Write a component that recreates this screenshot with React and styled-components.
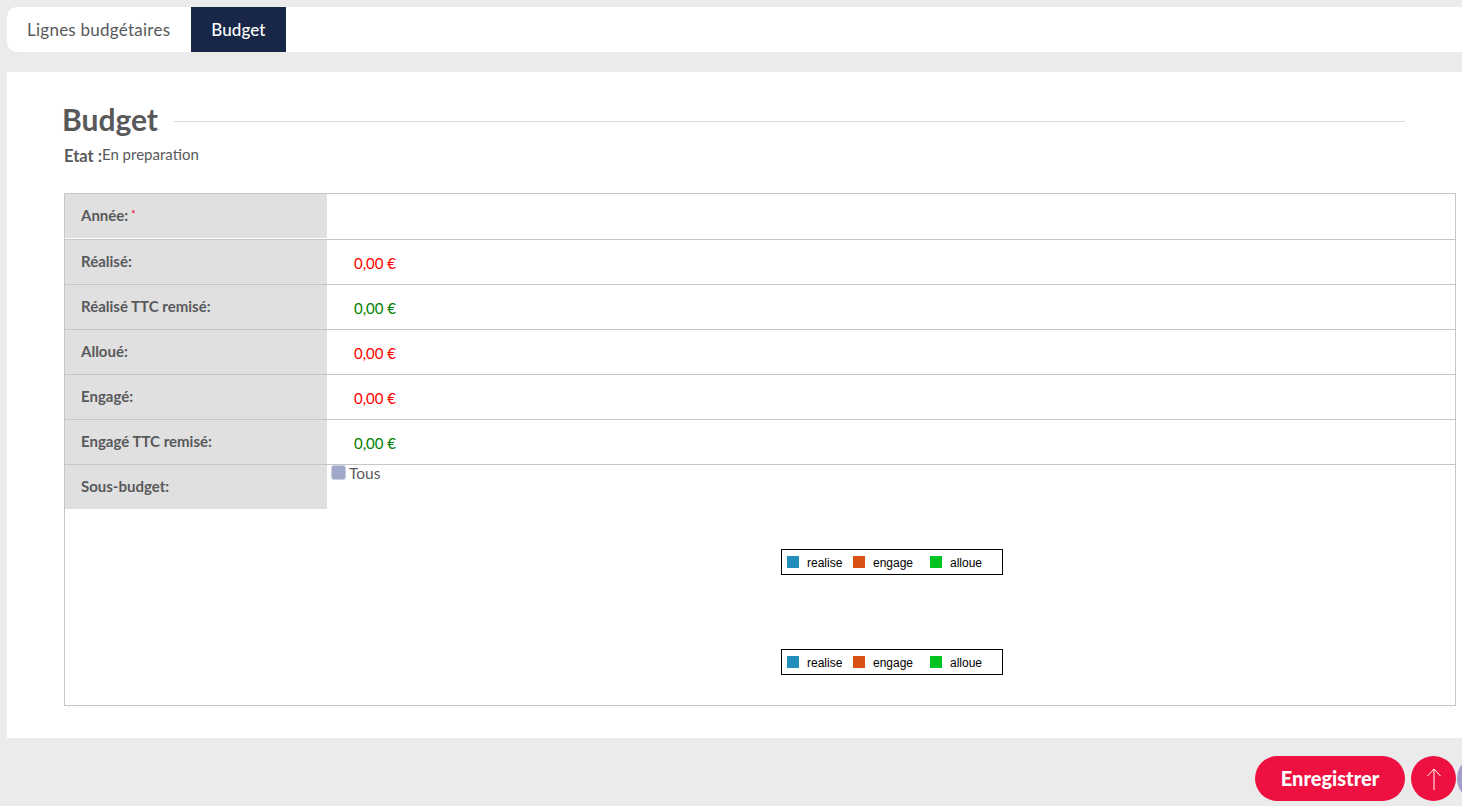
import styled, { createGlobalStyle } from "styled-components";

const GlobalStyle = createGlobalStyle`
  html, body {
    margin: 0;
    padding: 0;
    background: #ebebeb;
    overflow: hidden;
  }
  * { box-sizing: border-box; }
`;

const Page = styled.div`
  width: 1462px;
  height: 806px;
  overflow: hidden;
  padding: 7px 0 0 7px;
  font-family: "Lato", "Open Sans", sans-serif;
  color: #58595b;
`;

const TabBar = styled.div`
  display: flex;
  height: 45px;
  background: #fff;
  border-radius: 10px 0 0 10px;
`;

const Tab = styled.div`
  display: flex;
  align-items: center;
  padding: 0 ${(p) => (p.$active ? 20 : 21)}px 0 20px;
  font-size: 17px;
  letter-spacing: ${(p) => (p.$active ? 0.1 : 0.25)}px;
  background: ${(p) => (p.$active ? "#182747" : "transparent")};
  color: ${(p) => (p.$active ? "#fff" : "#58595b")};
  font-weight: ${(p) => (p.$active ? 500 : 400)};
`;

const Card = styled.div`
  margin-top: 20px;
  height: 666px;
  background: #fff;
  padding: 32px 6px 0 55px;
`;

const TitleRow = styled.div`
  display: flex;
  align-items: center;
  gap: 16px;
  height: 32px;
  padding-right: 51px;
`;

const Title = styled.h1`
  margin: 0 0 2px;
  font-size: 30px;
  font-weight: 700;
  line-height: 32px;
  color: #58595b;
`;

const TitleRule = styled.div`
  flex: 1;
  height: 1px;
  margin-top: 2px;
  background: #d9d9d9;
`;

const State = styled.div`
  display: flex;
  align-items: baseline;
  height: 24px;
  margin-top: 8px;
  margin-left: 2px;
  line-height: 24px;
`;

const StateLabel = styled.span`
  font-size: 16.5px;
  font-weight: 700;
`;

const StateValue = styled.span`
  font-size: 15px;
  position: relative;
  top: -2px;
`;

const Table = styled.div`
  margin-top: 25px;
  margin-left: 2px;
  height: 513px;
  border: 1px solid #c6c6c6;
`;

const Row = styled.div`
  display: flex;
  height: ${(p) => p.$height || 45}px;
  border-bottom: ${(p) => (p.$last ? "none" : "1px solid #c6c6c6")};
`;

const Label = styled.div`
  width: 262px;
  height: 44px;
  display: flex;
  align-items: center;
  padding: 0 0 2px 16px;
  background: #e0e0e0;
  font-size: 15px;
  font-weight: 700;
  color: #58595b;
`;

const Required = styled.sup`
  color: #ed1040;
  font-size: 10px;
  margin-left: 3px;
  line-height: 1;
  position: relative;
  top: -2px;
`;

const Value = styled.div`
  display: flex;
  align-items: center;
  padding: 2px 0 0 27px;
  font-size: 15px;
  color: ${(p) => p.$color};
`;

const CheckRow = styled.label`
  display: flex;
  align-items: flex-start;
  gap: 3px;
  padding: 0 0 0 4px;
  font-size: 15.5px;
  line-height: 16px;
`;

const CheckBox = styled.span`
  width: 15px;
  height: 15px;
  background: #a0aac8;
  border: 1px solid #c9cfdf;
  border-radius: 3px;
`;

const Charts = styled.div`
  height: 196px;
  padding: 40px 0 0 716px;
  display: flex;
  flex-direction: column;
  gap: 74px;
`;

const Legend = styled.div`
  display: flex;
  align-items: center;
  width: 222px;
  height: 26px;
  padding-left: 5px;
  border: 1px solid #000;
  background: #fff;
  font-family: "Liberation Sans", Arial, sans-serif;
  font-size: 12px;
  color: #000;
`;

const LegendItem = styled.div`
  display: flex;
  align-items: center;
  width: ${(p) => p.$width}px;
`;

const LegendText = styled.span`
  padding-top: 2px;
`;

const Swatch = styled.span`
  width: 12px;
  height: 12px;
  margin-right: 8px;
  background: ${(p) => p.$color};
`;

const Actions = styled.div`
  display: flex;
  align-items: center;
  margin-top: 18px;
  padding-left: 1248px;
  width: 1500px;
`;

const SaveButton = styled.button`
  flex: none;
  width: 150px;
  height: 45px;
  margin-right: 6px;
  padding: 0 0 2px;
  border: 0;
  border-radius: 23px;
  background: #ed1040;
  color: #fff;
  font-family: "Lato", sans-serif;
  font-size: 20px;
  font-weight: 900;
`;

const RoundButton = styled.button`
  flex: none;
  width: 45px;
  height: 45px;
  margin-right: 1px;
  padding: 0;
  border: 0;
  border-radius: 50%;
  display: flex;
  align-items: center;
  justify-content: center;
  background: ${(p) => p.$color};
`;

const rows = [
  { label: "Réalisé:", color: "#ff0000" },
  { label: "Réalisé TTC remisé:", color: "#008000" },
  { label: "Alloué:", color: "#ff0000" },
  { label: "Engagé:", color: "#ff0000" },
  { label: "Engagé TTC remisé:", color: "#008000" },
];

const ChartLegend = () => (
  <Legend>
    <LegendItem $width={66}>
      <Swatch $color="#218ebb" />
      <LegendText>realise</LegendText>
    </LegendItem>
    <LegendItem $width={77}>
      <Swatch $color="#d95213" />
      <LegendText>engage</LegendText>
    </LegendItem>
    <LegendItem $width={60}>
      <Swatch $color="#00c322" />
      <LegendText>alloue</LegendText>
    </LegendItem>
  </Legend>
);

export default function App() {
  return (
    <Page>
      <GlobalStyle />
      <TabBar>
        <Tab>Lignes budgétaires</Tab>
        <Tab $active>Budget</Tab>
      </TabBar>
      <Card>
        <TitleRow>
          <Title>Budget</Title>
          <TitleRule />
        </TitleRow>
        <State>
          <StateLabel>Etat :</StateLabel>
          <StateValue>En preparation</StateValue>
        </State>
        <Table>
          <Row $height={46}>
            <Label>
              Année:<Required>*</Required>
            </Label>
          </Row>
          {rows.map((row) => (
            <Row key={row.label}>
              <Label>{row.label}</Label>
              <Value $color={row.color}>0,00 €</Value>
            </Row>
          ))}
          <Row $height={44} $last>
            <Label>Sous-budget:</Label>
            <CheckRow>
              <CheckBox />
              Tous
            </CheckRow>
          </Row>
          <Charts>
            <ChartLegend />
            <ChartLegend />
          </Charts>
        </Table>
      </Card>
      <Actions>
        <SaveButton>Enregistrer</SaveButton>
        <RoundButton $color="#ed1040">
          <svg width="16" height="24" viewBox="0 0 16 24" fill="none" stroke="#fff" strokeWidth="1">
            <path d="M8 23V2M1.5 9L8 2l6.5 7" />
          </svg>
        </RoundButton>
        <RoundButton $color="#a09ccb" />
      </Actions>
    </Page>
  );
}
